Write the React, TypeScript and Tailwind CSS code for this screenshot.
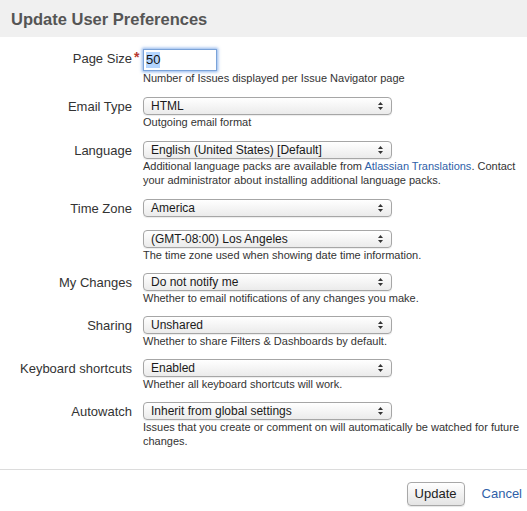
import React from "react";

function Arrows() {
  return (
    <svg width="7" height="10" viewBox="0 0 7 10" className="absolute right-[7px] top-1/2 -translate-y-1/2">
      <polygon points="1,4 3.5,1 6,4" fill="#333" />
      <polygon points="1,6 3.5,9 6,6" fill="#333" />
    </svg>
  );
}

function Select({ value }: { value: string }) {
  return (
    <div className="relative h-[18px] w-[249px] rounded-[4px] border border-[#a6a6a6] bg-gradient-to-b from-white to-[#ebebeb] shadow-[0_1px_1px_rgba(0,0,0,0.08)]">
      <span className="absolute left-[7px] top-0 text-[12px] leading-[16px] text-[#1a1a1a] whitespace-nowrap">{value}</span>
      <Arrows />
    </div>
  );
}

function Row({
  label,
  children,
  required,
  controlH = 18,
  gap = "mb-[11px]",
}: {
  label: string;
  children: React.ReactNode;
  required?: boolean;
  controlH?: number;
  gap?: string;
}) {
  return (
    <div className={"flex " + gap}>
      <div
        className={
          "relative w-[132px] shrink-0 text-right text-[13px] text-[#333] whitespace-nowrap " +
          (controlH === 22 ? "h-[22px] leading-[20px]" : "h-[18px] leading-[19px]")
        }
      >
        {label}
        {required && (
          <span className="absolute left-[134px] top-[1px] text-[14px] leading-[14px] font-bold text-[#b8392e]">*</span>
        )}
      </div>
      <div className="ml-[11px] flex flex-col">{children}</div>
    </div>
  );
}

function Desc({ children }: { children: React.ReactNode }) {
  return <div className="text-[11px] leading-[14px] text-[#333] whitespace-nowrap">{children}</div>;
}

export default function App() {
  return (
    <div className="w-[527px] h-[511px] bg-white font-['Liberation_Sans',Arial,sans-serif] text-[#333] overflow-hidden">
      <div className="h-[37px] bg-[#f0f0f0] px-[11px] flex items-center">
        <h2 className="text-[16.5px] font-bold text-[#555] leading-none pt-[1px]">Update User Preferences</h2>
      </div>
      <div className="pt-[12px] pb-[21px]">
        <Row label="Page Size" required controlH={22} gap="mb-[12px]">
          <div className="h-[22px] w-[74px] border border-[#7ba3d9] shadow-[0_0_3px_1px_rgba(88,144,225,0.7)] bg-white flex items-center pl-[2px]">
            <span className="bg-[#b4d5fe] text-[13px] leading-[16px] text-[#111]">50</span>
          </div>
          <Desc>Number of Issues displayed per Issue Navigator page</Desc>
        </Row>
        <Row label="Email Type" gap="mb-[12px]">
          <Select value="HTML" />
          <Desc>Outgoing email format</Desc>
        </Row>
        <Row label="Language" gap="mb-[12px]">
          <Select value="English (United States) [Default]" />
          <Desc>
            Additional language packs are available from{" "}
            <a className="text-[#2f5fa8]">Atlassian Translations</a>. Contact
            <br />
            your administrator about installing additional language packs.
          </Desc>
        </Row>
        <Row label="Time Zone">
          <Select value="America" />
          <div className="mt-[13px]">
            <Select value="(GMT-08:00) Los Angeles" />
          </div>
          <Desc>The time zone used when showing date time information.</Desc>
        </Row>
        <Row label="My Changes">
          <Select value="Do not notify me" />
          <Desc>Whether to email notifications of any changes you make.</Desc>
        </Row>
        <Row label="Sharing">
          <Select value="Unshared" />
          <Desc>Whether to share Filters &amp; Dashboards by default.</Desc>
        </Row>
        <Row label="Keyboard shortcuts">
          <Select value="Enabled" />
          <Desc>Whether all keyboard shortcuts will work.</Desc>
        </Row>
        <Row label="Autowatch" gap="mb-0">
          <Select value="Inherit from global settings" />
          <Desc>
            Issues that you create or comment on will automatically be watched for future
            <br />
            changes.
          </Desc>
        </Row>
      </div>
      <div className="border-t border-[#dcdcdc] pt-[12px] pr-[5px] flex justify-end items-center gap-[17px]">
        <button className="h-[24px] px-[7px] rounded-[4px] border border-[#a8a8a8] bg-gradient-to-b from-white to-[#e4e4e4] text-[13px] text-[#222] shadow-[0_1px_1px_rgba(0,0,0,0.1)]">
          Update
        </button>
        <a className="text-[13px] text-[#2f5fa8]">Cancel</a>
      </div>
    </div>
  );
}
